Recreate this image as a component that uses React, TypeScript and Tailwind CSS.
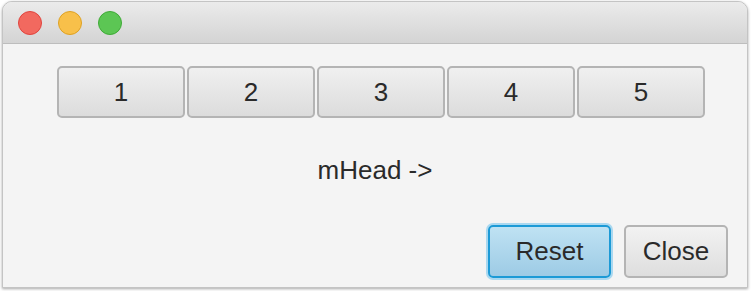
import React from 'react';

const font = { fontFamily: '"Liberation Sans", Arial, sans-serif' };

const Light = ({ className }: { className: string }) => (
  <span className={`block h-6 w-6 rounded-full border ${className}`} />
);

export default function App() {
  const numbers = ['1', '2', '3', '4', '5'];

  return (
    <div className="h-[291px] w-[752px] bg-white pl-[2px] pt-[1px]" style={font}>
      <div className="flex h-[287px] w-[746px] flex-col overflow-hidden rounded-t-[10px] border border-[#c4c4c4] bg-[#f4f4f4] shadow-[0_1px_3px_rgba(0,0,0,0.35)]">
        {/* title bar */}
        <div className="flex h-[42px] shrink-0 items-center gap-4 border-b border-[#bdbdbd] bg-gradient-to-b from-[#ebebeb] to-[#d4d4d4] pl-[15px]">
          <Light className="border-[#e0443e] bg-[#f2695f]" />
          <Light className="border-[#dea123] bg-[#f8c04a]" />
          <Light className="border-[#3faa37] bg-[#5cc654]" />
        </div>

        {/* number buttons */}
        <div className="mt-[22px] flex gap-[2px] pl-[54px]">
          {numbers.map((n) => (
            <button
              key={n}
              className="flex h-[52px] w-[128px] items-center justify-center rounded-[5px] border-2 border-[#b4b4b4] bg-gradient-to-b from-[#f0f0f0] to-[#dcdcdc] text-[26px] text-[#2a2a2a]"
            >
              {n}
            </button>
          ))}
        </div>

        <p className="mt-[37px] text-center text-[26px] leading-[30px] text-[#2a2a2a]">mHead -&gt;</p>

        {/* bottom buttons */}
        <div className="mt-auto mb-[9px] flex justify-end gap-[13px] pr-[19px]">
          <button className="flex h-[53px] w-[123px] items-center justify-center rounded-[5px] border-2 border-[#1c9ad6] bg-gradient-to-b from-[#bfe2f3] to-[#9dcbe5] text-[26px] text-[#2a2a2a] shadow-[0_0_0_2px_#a9d8f0]">
            Reset
          </button>
          <button className="flex h-[53px] w-[104px] items-center justify-center rounded-[5px] border-2 border-[#b4b4b4] bg-gradient-to-b from-[#f2f2f2] to-[#dedede] text-[26px] text-[#2a2a2a]">
            Close
          </button>
        </div>
      </div>
    </div>
  );
}
